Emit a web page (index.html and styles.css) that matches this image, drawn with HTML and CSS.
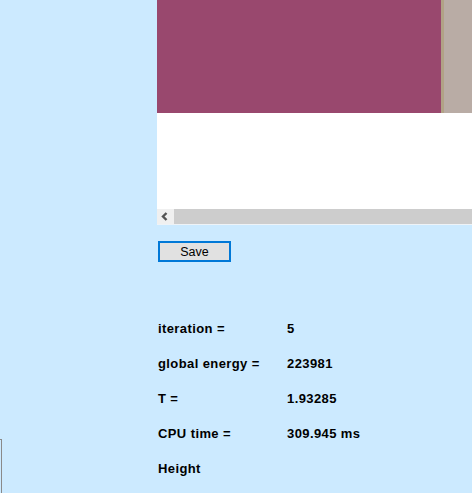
FILE: index.html
```html
<!DOCTYPE html>
<html>
<head>
<meta charset="utf-8">
<link rel="stylesheet" href="styles.css">
</head>
<body>
<div class="page">
  <div class="left">
    <div class="stub"></div>
  </div>
  <div class="right">
    <div class="view">
      <div class="image">
        <div class="purple"></div>
        <div class="edge"></div>
        <div class="beige"></div>
      </div>
      <div class="blank"></div>
      <div class="hscroll">
        <div class="arrow">
          <svg width="17" height="15" viewBox="0 0 17 15"><path d="M9.5 4 L6 7.5 L9.5 11" fill="none" stroke="#555555" stroke-width="2.4"/></svg>
        </div>
        <div class="track"></div>
      </div>
    </div>
    <button class="save">Save</button>
    <div class="stats">
      <div class="row"><span class="lbl">iteration =</span><span class="val">5</span></div>
      <div class="row"><span class="lbl">global energy =</span><span class="val">223981</span></div>
      <div class="row"><span class="lbl">T =</span><span class="val">1.93285</span></div>
      <div class="row"><span class="lbl">CPU time =</span><span class="val">309.945 ms</span></div>
      <div class="row"><span class="lbl">Height</span><span class="val"></span></div>
    </div>
  </div>
</div>
</body>
</html>
```
FILE: styles.css
```css
html, body {
  margin: 0;
  padding: 0;
  background: #cceaff;
  overflow: hidden;
}
.page {
  display: flex;
  width: 472px;
  height: 493px;
  overflow: hidden;
}
.left {
  width: 157px;
  flex: none;
}
.stub {
  margin-top: 439px;
  width: 1px;
  height: 60px;
  border-top: 1px solid #8a8a8a;
  border-right: 1px solid #8a8a8a;
}
.right {
  flex: 1;
  display: flex;
  flex-direction: column;
  align-items: flex-start;
}
.view {
  width: 315px;
  background: #ffffff;
}
.image {
  display: flex;
  height: 113px;
}
.purple {
  width: 284px;
  background: #99486e;
}
.edge {
  width: 3px;
  background: #b1a286;
}
.beige {
  flex: 1;
  background: #b9aca5;
}
.blank {
  height: 96px;
}
.hscroll {
  display: flex;
  height: 15px;
  border-bottom: 1px solid #eef3f7;
  background: #cdcdcd;
}
.arrow {
  width: 17px;
  background: #f0f0f0;
  display: flex;
}
.track {
  flex: 1;
}
.save {
  margin: 16px 0 0 1px;
  width: 73px;
  height: 21px;
  padding: 0;
  border: 2px solid #0078d7;
  background: #e1e1e1;
  font-family: "Liberation Sans", Arial, sans-serif;
  font-size: 12.5px;
  color: #000;
}
.stats {
  margin-top: 49px;
  margin-left: 1px;
  font-family: "Liberation Sans", Arial, sans-serif;
  font-weight: bold;
  font-size: 13px;
  letter-spacing: 0.4px;
  color: #000;
}
.row {
  display: flex;
  height: 35px;
  line-height: 35px;
}
.lbl {
  width: 129px;
}
```
